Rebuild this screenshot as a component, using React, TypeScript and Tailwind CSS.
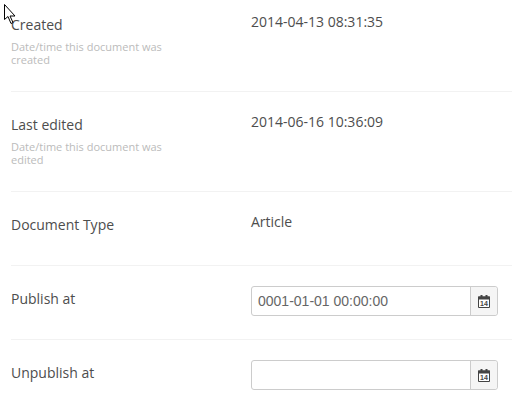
const CalendarIcon = () => (
  <svg width="12" height="13" viewBox="0 0 12 13">
    <path d="M0.5 2h11v10.5h-11z" fill="#fff" stroke="#444" />
    <rect x="0" y="1.5" width="12" height="3" fill="#444" />
    <rect x="2.5" y="0" width="2" height="3" fill="#444" />
    <rect x="7.5" y="0" width="2" height="3" fill="#444" />
    <text x="6" y="11.2" textAnchor="middle" fontSize="7" fontWeight="700" fill="#444" fontFamily="'Liberation Sans', sans-serif">14</text>
  </svg>
);

const DateInput = ({ value }: { value?: string }) => (
  <div className="flex w-[247px] h-[30px] border border-[#ccc] rounded-[3px] bg-white">
    <div className="flex-1 flex items-center pl-[6px] text-[14px] text-[#666] font-['Liberation_Sans',sans-serif]">
      {value}
    </div>
    <div className="w-[27px] flex items-center justify-center bg-[#f5f5f5] border-l border-[#ccc] rounded-r-[3px]">
      <CalendarIcon />
    </div>
  </div>
);

type RowProps = {
  label: string;
  hint?: string;
  value?: string;
  children?: React.ReactNode;
  first?: boolean;
};

const Row = ({ label, hint, value, children, first }: RowProps) => (
  <div className={`flex min-h-[74px] border-b border-[#f2f2f2] pb-[23px] ${first ? 'pt-[14px]' : 'pt-[22px]'}`}>
    <div className="w-[240px] shrink-0">
      <div className="text-[14px] leading-[21px] text-[#4d4d4d]">{label}</div>
      {hint && <div className="w-[165px] mt-[5px] pb-[2px] text-[11px] leading-[13px] text-[#bbb]">{hint}</div>}
    </div>
    <div className="text-[14px] leading-[20px] text-[#4d4d4d] -mt-[2px]">
      {value}
      {children}
    </div>
  </div>
);

export default function App() {
  return (
    <div className="relative w-[514px] h-[401px] overflow-hidden bg-white font-['Open_Sans',sans-serif]">
      <div className="pl-[11px] pr-[2px]">
        <Row first label="Created" hint="Date/time this document was created" value="2014-04-13 08:31:35" />
        <Row label="Last edited" hint="Date/time this document was edited" value="2014-06-16 10:36:09" />
        <Row label="Document Type" value="Article" />
        <Row label="Publish at"><DateInput value="0001-01-01 00:00:00" /></Row>
        <Row label="Unpublish at"><DateInput /></Row>
      </div>
      {/* mouse pointer captured in the screenshot */}
      <svg className="absolute left-[4px] top-[4px]" width="13" height="21" viewBox="0 0 13 21">
        <path d="M0.5 0.5v15l3.5-3 3 7 2-1-3-6.5h5z" fill="#fff" stroke="#000" strokeWidth="1" />
      </svg>
    </div>
  );
}
